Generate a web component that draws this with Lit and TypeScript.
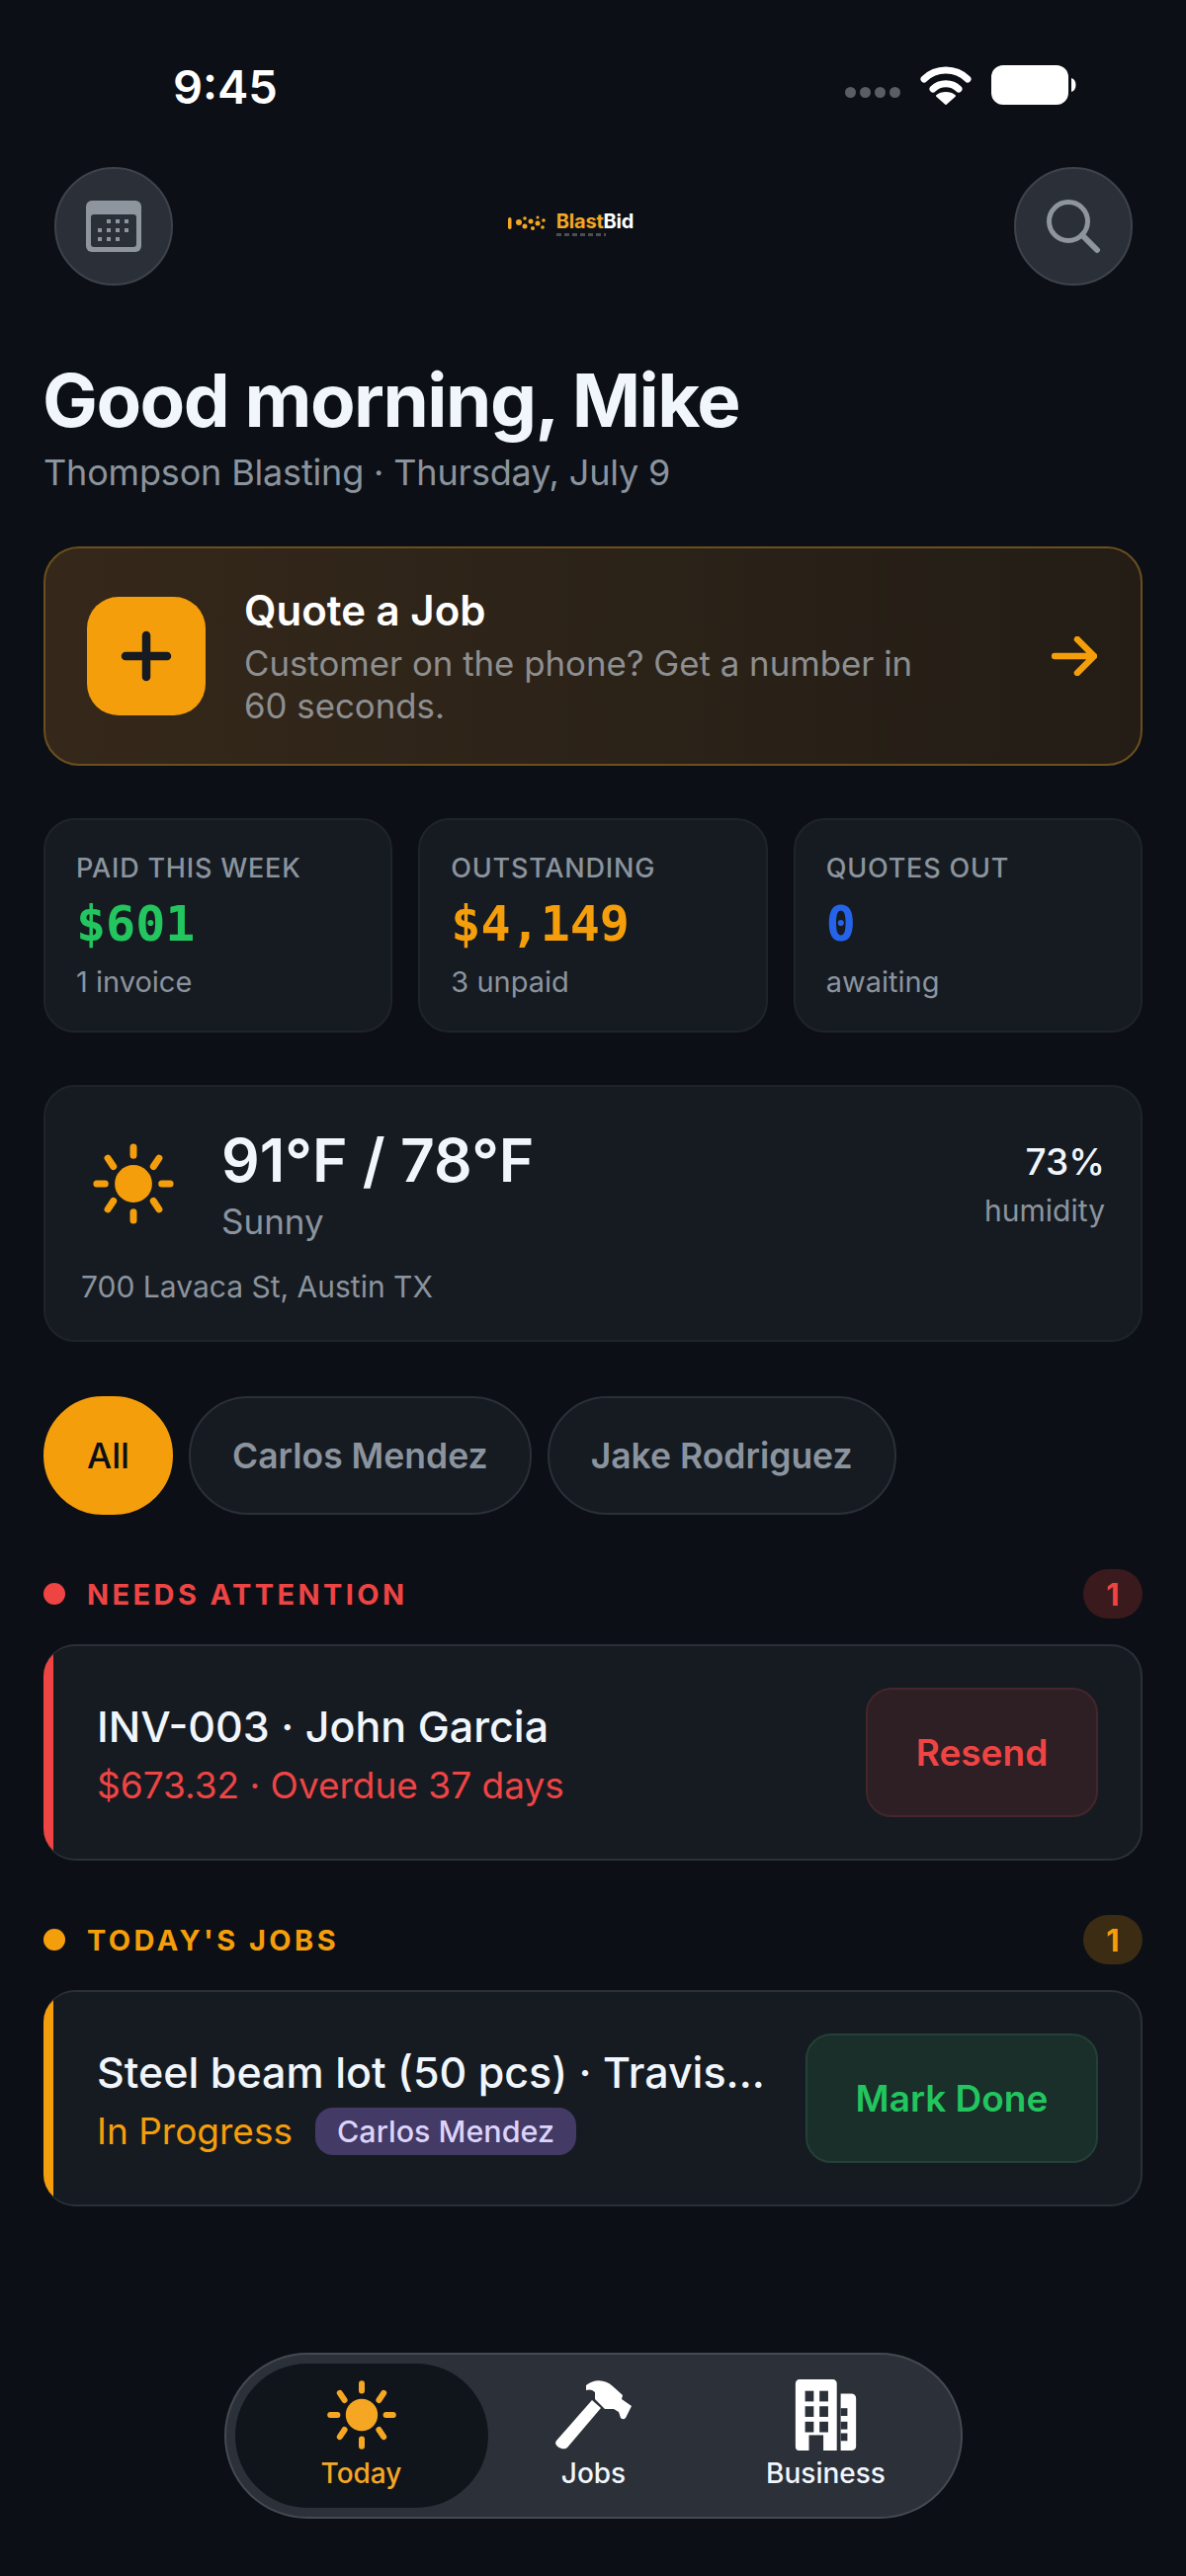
import { LitElement, html, css, svg } from 'lit';
import { customElement } from 'lit/decorators.js';

const sunRays = (color: string) => svg`
  <circle cx="30" cy="30" r="13.5" fill="${color}"></circle>
  <g stroke="${color}" stroke-width="5" stroke-linecap="round">
    <path d="M30 3.5V9.5M30 50.5V56.5M3.5 30H9.500M50.500 30H56.500M11.500 11.500L15.500 17.500M48.500 11.500L44.500 17.500M11.500 48.500L15.500 42.500M48.500 48.500L44.500 42.500"></path>
  </g>`;

@customElement('app-root')
export class AppRoot extends LitElement {
  static styles = css`
    :host {
      display: block;
      font-family: Inter, 'Liberation Sans', sans-serif;
      color: #f0f6fc;
    }
    * { box-sizing: border-box; }

    .page {
      height: 2607px;
      background: #0c1016;
      display: flex;
      flex-direction: column;
      padding: 0 44px;
      overflow: hidden;
    }

    /* status bar */
    .status {
      height: 169px;
      display: flex;
      justify-content: space-between;
      align-items: flex-start;
      padding: 61px 67px 0 131px;
    }
    .time { font-size: 47px; line-height: 54px; font-weight: 600; color: #fff; }
    .status-icons { display: flex; align-items: center; gap: 20px; height: 50px; }
    .signal { display: flex; gap: 4px; margin-top: 14px; }
    .signal i { width: 11px; height: 11px; border-radius: 50%; background: #5a5e64; }

    /* top row */
    .top {
      display: flex;
      align-items: center;
      justify-content: space-between;
      padding: 0 10px 0 11px;
    }
    .round {
      width: 120px;
      height: 120px;
      border-radius: 50%;
      background: #2b3038;
      border: 2px solid #3e434b;
      display: flex;
      align-items: center;
      justify-content: center;
    }
    .logo { display: flex; align-items: center; gap: 10px; margin-right: 46px; margin-bottom: 6px; }
    .logo-name { font-size: 20px; line-height: 20px; font-weight: 700; color: #f5a623; letter-spacing: -0.2px; }
    .logo-name span { color: #fff; }
    .logo-tag { display: block; height: 3px; width: 50px; margin-top: 2px; background: repeating-linear-gradient(90deg, #4a4d52 0 5px, transparent 5px 8px); }

    h1 {
      margin: 74px 0 0 -1px;
      font-size: 74.500px;
      line-height: 84px;
      font-weight: 700;
      letter-spacing: -1.5px;
      color: #f0f6fc;
    }
    .sub { margin-top: 9px; font-size: 36px; line-height: 44px; color: #8b949e; letter-spacing: -0.17px; }

    /* quote card */
    .quote {
      margin-top: 53px;
      height: 222px;
      border-radius: 36px;
      border: 2px solid #6b4f1e;
      background: linear-gradient(90deg, #35281a, #231d16);
      display: flex;
      align-items: center;
      padding: 0 44px 0 42px;
    }
    .plus {
      width: 120px;
      height: 120px;
      flex: none;
      border-radius: 32px;
      background: #f59e0b;
      display: flex;
      align-items: center;
      justify-content: center;
    }
    .quote-text { flex: 1; margin-left: 39px; }
    .quote-title { font-size: 42px; line-height: 52px; font-weight: 600; color: #fff; }
    .quote-desc { width: 690px; font-size: 34.800px; line-height: 43px; color: #8d8f91; margin-top: 6px; }

    /* stats */
    .stats { margin-top: 53px; display: grid; grid-template-columns: repeat(3, 1fr); gap: 26px; }
    .stat {
      height: 217px;
      border-radius: 32px;
      border: 2px solid #1f242b;
      background: #161b22;
      padding: 31px 31px 0;
    }
    .stat-label { font-size: 27px; line-height: 36px; font-weight: 500; color: #8b949e; letter-spacing: 0.8px; }
    .stat-value { font-family: 'DejaVu Sans Mono', 'Liberation Mono', monospace; font-size: 50px; line-height: 60px; font-weight: 700; margin-top: 8px; }
    .stat-sub { font-size: 29px; line-height: 36px; color: #8b949e; margin-top: 11px; }
    .green { color: #22c55e; }
    .amber { color: #f59e0b; }
    .blue { color: #2563eb; }
    .red { color: #ef4444; }

    /* weather */
    .weather {
      margin-top: 53px;
      height: 260px;
      border-radius: 32px;
      border: 2px solid #1f242b;
      background: #161b22;
      padding: 40px 36px 0;
    }
    .weather-row { display: flex; align-items: flex-start; }
    .sun { margin: 16px 0 0 11px; flex: none; }
    .weather-main { flex: 1; margin-left: 47px; }
    .temp { font-size: 60.500px; line-height: 68px; font-weight: 600; color: #f0f6fc; }
    .cond { font-size: 35px; line-height: 44px; color: #8b949e; margin-top: 6px; }
    .hum { text-align: right; padding-top: 13px; }
    .hum-val { font-size: 37px; line-height: 46px; font-weight: 500; color: #f0f6fc; }
    .hum-label { font-size: 30px; line-height: 38px; color: #8b949e; margin-top: 7px; }
    .addr { font-size: 30px; line-height: 38px; color: #8b949e; margin-top: 25px; }

    /* chips */
    .chips { margin-top: 55px; display: flex; gap: 16px; }
    .chip {
      height: 120px;
      border-radius: 60px;
      border: 2px solid #2b3038;
      background: #161b22;
      padding: 0 42px;
      display: flex;
      align-items: center;
      font-size: 35.500px;
      font-weight: 600;
      color: #8b949e;
    }
    .chip.on { background: #f59e0b; border-color: #f59e0b; color: #0c1016; font-weight: 500; }

    /* sections */
    .section { display: flex; align-items: center; height: 50px; }
    .dot { width: 22px; height: 22px; border-radius: 50%; margin-right: 22px; background: currentColor; }
    .section-name { flex: 1; font-size: 29px; font-weight: 700; letter-spacing: 3.4px; }
    .count {
      width: 60px;
      height: 50px;
      border-radius: 25px;
      display: flex;
      align-items: center;
      justify-content: center;
      font-size: 31px;
      font-weight: 700;
    }
    .count.red { background: #3a1a1d; }
    .count.amber { background: #3c2c14; }

    .card {
      margin-top: 26px;
      height: 219px;
      border-radius: 32px;
      border: 2px solid #2b3038;
      border-left: none;
      background: #161b22;
      display: flex;
      align-items: center;
      padding-right: 43px;
      overflow: hidden;
    }
    .bar { width: 10px; align-self: stretch; flex: none; margin: -2px 0; background: currentColor; }
    .card-text { flex: 1; min-width: 0; margin-left: 44px; padding-top: 3px; }
    .card-title { font-size: 43px; line-height: 56px; font-weight: 500; color: #f0f6fc; white-space: nowrap; }
    .card-meta { display: flex; align-items: center; font-size: 37px; line-height: 48px; margin-top: 8px; }
    .assignee {
      margin-left: 23px;
      height: 48px;
      padding: 0 22px;
      border-radius: 18px;
      background: #433a66;
      color: #dcd4fb;
      font-size: 30.500px;
      font-weight: 500;
      display: flex;
      align-items: center;
    }
    .action {
      height: 131px;
      border-radius: 26px;
      display: flex;
      align-items: center;
      justify-content: center;
      font-size: 37px;
      font-weight: 600;
      flex: none;
    }
    .action.resend { width: 235px; background: #2e1f25; border: 2px solid #44262b; color: #ef4444; }
    .action.done { width: 296px; background: #1a2e2a; border: 2px solid #234136; color: #22c55e; margin-left: 40px; }

    /* tab bar */
    .nav-wrap { margin-top: auto; padding-bottom: 58px; display: flex; justify-content: center; }
    .nav {
      width: 747px;
      height: 168px;
      border-radius: 84px;
      background: #2c3038;
      border: 2px solid #454951;
      display: flex;
      padding: 9px;
    }
    .tab {
      width: 256px;
      height: 146px;
      flex: none;
      border-radius: 73px;
      display: flex;
      flex-direction: column;
      align-items: center;
      justify-content: flex-start;
      padding-top: 16px;
      font-size: 28px;
      font-weight: 500;
      color: #f0f6fc;
    }
    .tab svg { display: block; height: 72px; }
    .tab span { margin-top: 6px; line-height: 34px; }
    .tab.on { background: #10151c; color: #f5a623; }
    .tab.jobs { width: 212px; margin-left: 1px; }
    .tab.biz { width: 256px; margin-left: 1px; }
  `;

  render() {
    return html`
      <div class="page">
        <div class="status">
          <div class="time">9:45</div>
          <div class="status-icons">
            <div class="signal"><i></i><i></i><i></i><i></i></div>
            <svg width="52" height="42" viewBox="0 0 52 42">
              <path d="M4 15C16 3 36 3 48 15" fill="none" stroke="#fff" stroke-width="7" stroke-linecap="round"></path>
              <path d="M13 25C20 18 32 18 39 25" fill="none" stroke="#fff" stroke-width="7" stroke-linecap="round"></path>
              <path d="M26 40L17 32C22 28 30 28 35 32Z" fill="#fff" stroke="#fff" stroke-width="2" stroke-linejoin="round"></path>
            </svg>
            <svg width="86" height="40" viewBox="0 0 86 40">
              <rect x="0" y="0" width="78" height="40" rx="12" fill="#fff"></rect>
              <path d="M81 13C84 14 85.500 16.500 85.500 20C85.500 23.500 84 26 81 27Z" fill="#fff"></path>
            </svg>
          </div>
        </div>

        <div class="top">
          <div class="round">
            <svg width="56" height="52" viewBox="0 0 56 52">
              <rect width="56" height="52" rx="6" fill="#8e959e"></rect>
              <rect x="5" y="14" width="46" height="33" rx="3" fill="#2b3038"></rect>
              <g fill="#8e959e">
                <rect x="21" y="19" width="4" height="4"></rect><rect x="30" y="19" width="4" height="4"></rect><rect x="39" y="19" width="4" height="4"></rect>
                <rect x="12" y="28" width="4" height="4"></rect><rect x="21" y="28" width="4" height="4"></rect><rect x="30" y="28" width="4" height="4"></rect><rect x="39" y="28" width="4" height="4"></rect>
                <rect x="12" y="37" width="4" height="4"></rect><rect x="21" y="37" width="4" height="4"></rect><rect x="30" y="37" width="4" height="4"></rect>
              </g>
            </svg>
          </div>
          <div class="logo">
            <svg width="39" height="18" viewBox="0 0 39 18">
              <g fill="#f5a623">
                <rect x="0" y="3" width="3.500" height="12" rx="1.700"></rect>
                <circle cx="11" cy="8" r="3"></circle><circle cx="17" cy="4" r="1.800"></circle><circle cx="17" cy="12" r="2.500"></circle>
                <circle cx="23" cy="7" r="2.500"></circle><circle cx="25" cy="14" r="2"></circle><circle cx="30" cy="3" r="1.500"></circle>
                <circle cx="30" cy="9" r="2.500"></circle><circle cx="36" cy="6" r="1.800"></circle><circle cx="35" cy="13" r="1.800"></circle>
              </g>
            </svg>
            <div>
              <div class="logo-name">Blast<span>Bid</span></div>
              <i class="logo-tag"></i>
            </div>
          </div>
          <div class="round">
            <svg width="56" height="56" viewBox="0 0 56 56">
              <circle cx="23" cy="23" r="19.500" fill="none" stroke="#8e959e" stroke-width="5"></circle>
              <path d="M37 37L52 52" stroke="#8e959e" stroke-width="6" stroke-linecap="round"></path>
            </svg>
          </div>
        </div>

        <h1>Good morning, Mike</h1>
        <div class="sub">Thompson Blasting · Thursday, July 9</div>

        <div class="quote">
          <div class="plus">
            <svg width="52" height="52" viewBox="0 0 52 52">
              <path d="M26 5V47M5 26H47" stroke="#161b22" stroke-width="8.500" stroke-linecap="round"></path>
            </svg>
          </div>
          <div class="quote-text">
            <div class="quote-title">Quote a Job</div>
            <div class="quote-desc">Customer on the phone? Get a number in 60 seconds.</div>
          </div>
          <svg width="46" height="40" viewBox="0 0 46 40">
            <path d="M3 20H43M26 3L43 20L26 37" fill="none" stroke="#f59e0b" stroke-width="6.500" stroke-linecap="round" stroke-linejoin="round"></path>
          </svg>
        </div>

        <div class="stats">
          <div class="stat">
            <div class="stat-label">PAID THIS WEEK</div>
            <div class="stat-value green">$601</div>
            <div class="stat-sub">1 invoice</div>
          </div>
          <div class="stat">
            <div class="stat-label">OUTSTANDING</div>
            <div class="stat-value amber">$4,149</div>
            <div class="stat-sub">3 unpaid</div>
          </div>
          <div class="stat">
            <div class="stat-label">QUOTES OUT</div>
            <div class="stat-value blue">0</div>
            <div class="stat-sub">awaiting</div>
          </div>
        </div>

        <div class="weather">
          <div class="weather-row">
            <svg class="sun" width="84" height="84" viewBox="0 0 60 60">${sunRays('#f59e0b')}</svg>
            <div class="weather-main">
              <div class="temp">91°F / 78°F</div>
              <div class="cond">Sunny</div>
            </div>
            <div class="hum">
              <div class="hum-val">73%</div>
              <div class="hum-label">humidity</div>
            </div>
          </div>
          <div class="addr">700 Lavaca St, Austin TX</div>
        </div>

        <div class="chips">
          <div class="chip on">All</div>
          <div class="chip">Carlos Mendez</div>
          <div class="chip">Jake Rodriguez</div>
        </div>

        <div class="section red" style="margin-top:55px">
          <i class="dot"></i>
          <div class="section-name">NEEDS ATTENTION</div>
          <div class="count red">1</div>
        </div>
        <div class="card">
          <i class="bar red"></i>
          <div class="card-text">
            <div class="card-title">INV-003 · John Garcia</div>
            <div class="card-meta red">$673.32 · Overdue 37 days</div>
          </div>
          <div class="action resend">Resend</div>
        </div>

        <div class="section amber" style="margin-top:55px">
          <i class="dot"></i>
          <div class="section-name">TODAY'S JOBS</div>
          <div class="count amber">1</div>
        </div>
        <div class="card">
          <i class="bar amber"></i>
          <div class="card-text">
            <div class="card-title">Steel beam lot (50 pcs) · Travis...</div>
            <div class="card-meta amber">In Progress<span class="assignee">Carlos Mendez</span></div>
          </div>
          <div class="action done">Mark Done</div>
        </div>

        <div class="nav-wrap">
          <div class="nav">
            <div class="tab on">
              <svg width="72" height="72" viewBox="0 0 60 60">${sunRays('#f5a623')}</svg>
              <span>Today</span>
            </div>
            <div class="tab jobs">
              <svg width="80" height="72" viewBox="0 0 80 72">
                <path d="M2 62L38 21L47 29L13 69C9 73 -2 67 2 62Z" fill="#fff"></path>
                <path d="M32 6C40 -1 52 0 59 7L69 16L68 20L78 27L72 39C70 41 68 40 67 39L65 33L60 30L51 30L41 20L41 13C38 10 35 10 32 11Z" fill="#fff"></path>
              </svg>
              <span>Jobs</span>
            </div>
            <div class="tab biz">
              <svg width="64" height="74" viewBox="0 0 64 74">
                <path d="M4 0H39C41 0 43 2 43 4V74H3C1 74 0 72 0 70V4C0 2 2 0 4 0Z" fill="#fff"></path>
                <path d="M47 15H58C61 15 63 17 63 20V70C63 72 61 74 59 74H47Z" fill="#fff"></path>
                <g fill="#2c3038">
                  <rect x="10" y="12" width="9" height="11"></rect><rect x="25" y="12" width="9" height="11"></rect>
                  <rect x="10" y="28" width="9" height="11"></rect><rect x="25" y="28" width="9" height="11"></rect>
                  <rect x="10" y="44" width="9" height="11"></rect><rect x="25" y="44" width="9" height="11"></rect>
                  <rect x="14" y="58" width="15" height="16"></rect>
                  <rect x="47" y="30" width="7" height="8"></rect><rect x="47" y="44" width="7" height="8"></rect><rect x="47" y="56" width="7" height="8"></rect>
                </g>
              </svg>
              <span>Business</span>
            </div>
          </div>
        </div>
      </div>
    `;
  }
}
